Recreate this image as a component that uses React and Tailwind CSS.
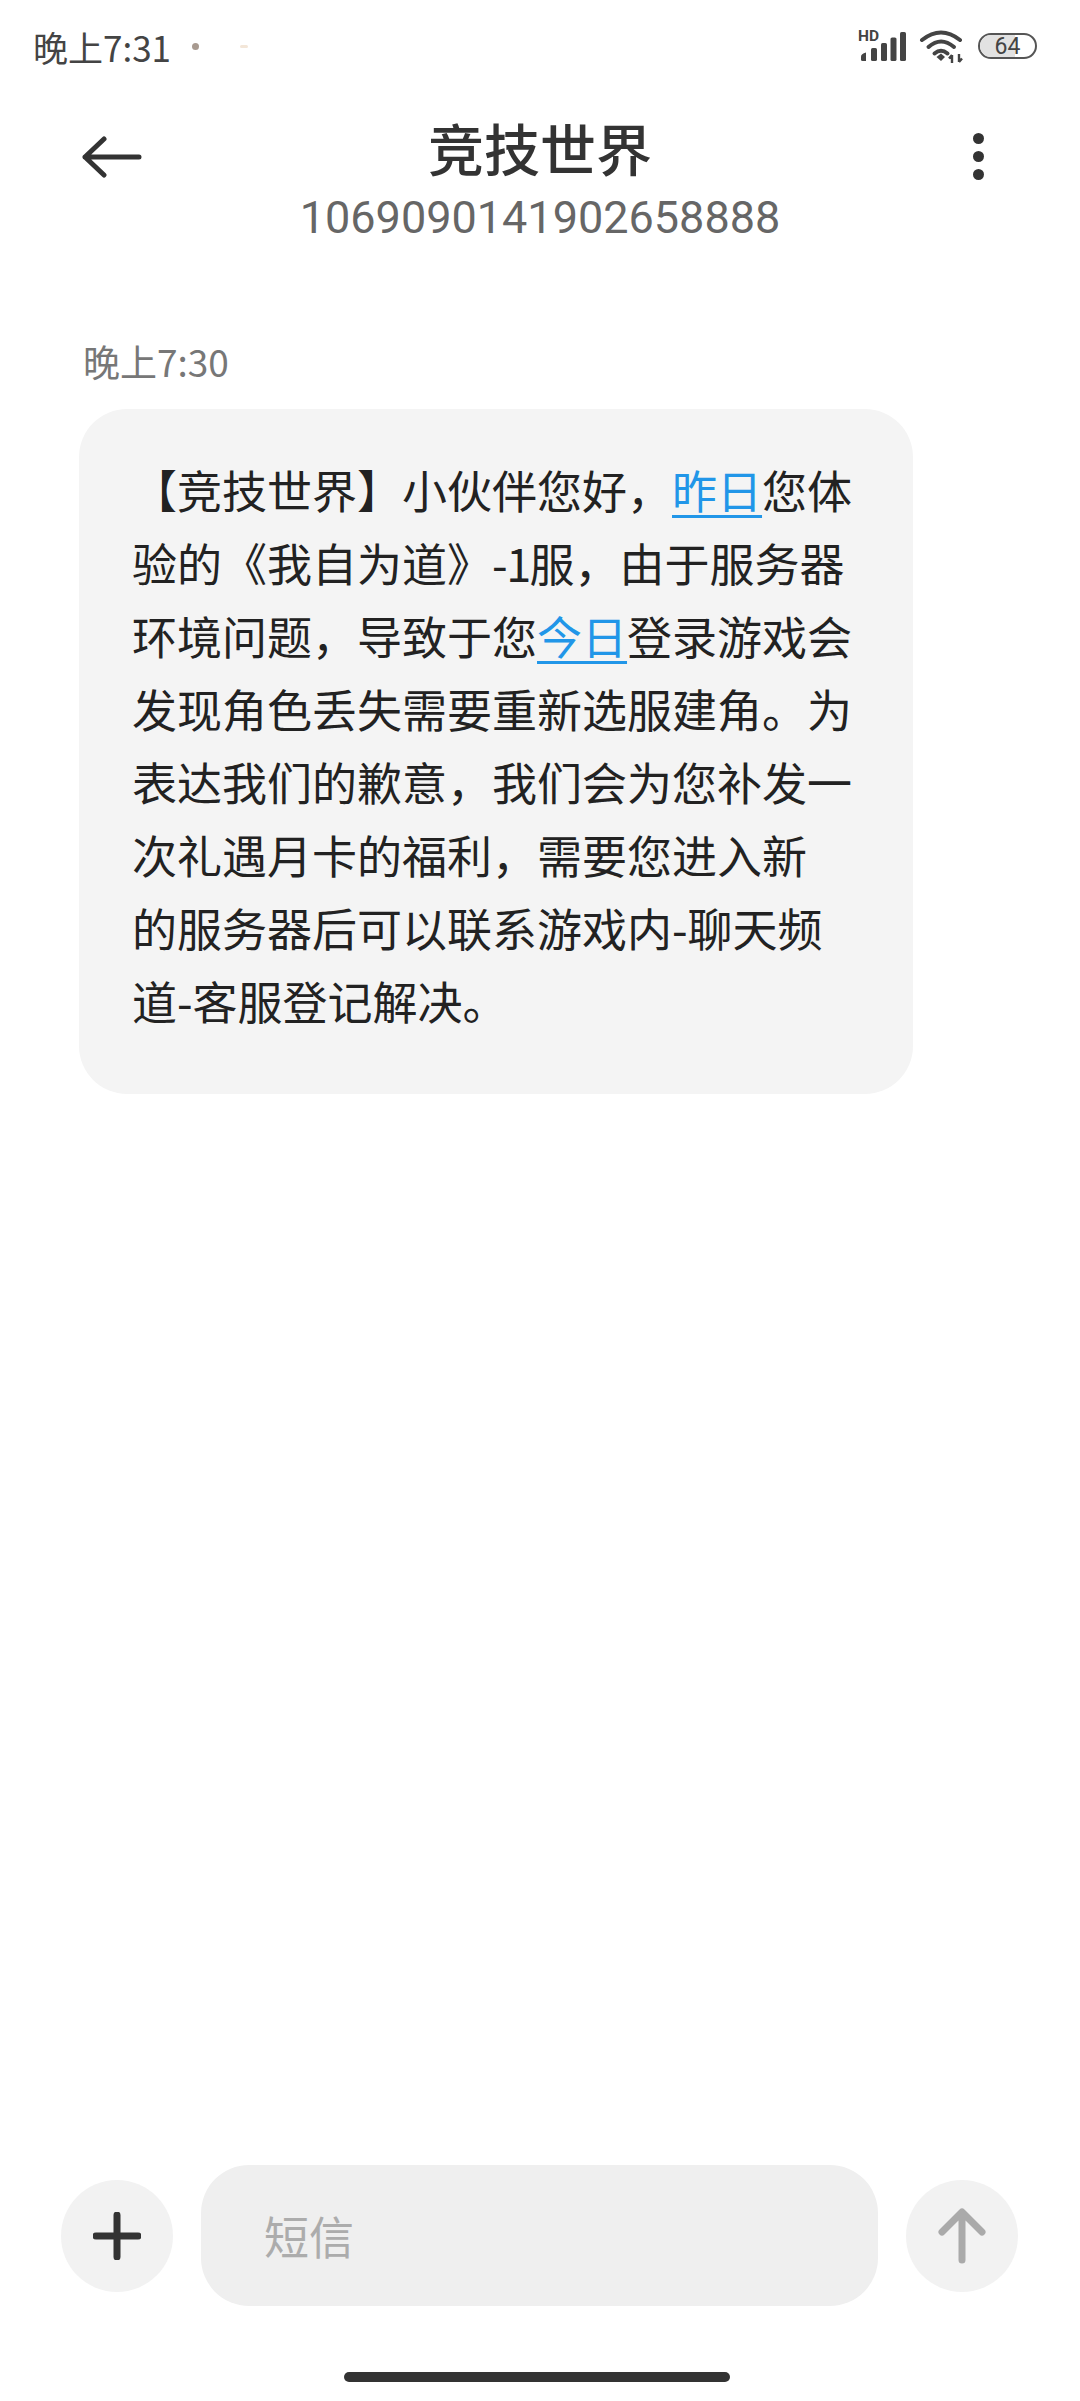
const cjk = { fontFamily: '"Noto Sans CJK SC", "Noto Sans", sans-serif' };

function Signal() {
  return (
    <div className="relative w-[50px] h-[32px]">
      <span className="absolute left-0 top-[-1px] text-[15.5px] leading-none font-bold text-[#444]" style={{ fontFamily: 'Roboto, sans-serif' }}>HD</span>
      <svg width="50" height="32" viewBox="0 0 50 32" className="block">
        <path d="M3 26.5 Q3 24 8 22.5 V31 H4.5 Q3 31 3 29.5Z" fill="#444" />
        <rect x="13" y="18" width="6" height="13" rx="1.6" fill="#444" />
        <rect x="23" y="13" width="6" height="18" rx="1.6" fill="#444" />
        <rect x="32.5" y="7.5" width="6" height="23.5" rx="1.6" fill="#444" />
        <rect x="42" y="2" width="6" height="29" rx="1.6" fill="#444" />
      </svg>
    </div>
  );
}

function Wifi() {
  return (
    <svg width="46" height="34" viewBox="0 0 46 34" className="block">
      <g fill="none" stroke="#444" strokeWidth="4" strokeLinecap="round">
        <path d="M3 11 Q22 -4 41 11" />
        <path d="M9.5 18 Q22 7 35 18" />
        <path d="M15.5 24.5 Q22 19 28.5 24.5" />
      </g>
      <path d="M17.5 28 L22 24.5 L26 28 L22 32Z" fill="#444" />
      <path d="M33 34 V26 M30 29.5 L33 26 M40 25 V33 M40 33 L43 29.5" stroke="#444" strokeWidth="2.4" fill="none" />
    </svg>
  );
}

function Line({ children }) {
  return <div className="whitespace-nowrap">{children}</div>;
}

function Link({ children }) {
  return <span className="text-[#2196e8] underline underline-offset-[6px] decoration-[3px]">{children}</span>;
}

export default function App() {
  return (
    <div className="w-[1080px] h-[2401px] bg-white flex flex-col overflow-hidden" style={cjk}>
      <div className="h-[92px] pl-[33px] pr-[43px] flex items-center justify-between">
        <div className="flex items-center">
          <span className="text-[35px] leading-none text-[#444444]">晚上7:31</span>
          <span className="ml-[21px] w-[7px] h-[7px] rounded-full bg-[#a89a90]" />
          <span className="ml-[41px] w-[8px] h-[3px] rounded-full bg-[#f3e6d8]" />
        </div>
        <div className="flex items-center">
          <Signal />
          <div className="ml-[11px]"><Wifi /></div>
          <div className="ml-[13px] relative w-[59px] h-[26px] rounded-full border-[2px] border-[#555] overflow-hidden flex items-center justify-center">
            <div className="absolute left-0 top-0 bottom-0 w-[64%] bg-[#e2e2e2]" />
            <span className="relative text-[23px] leading-none text-[#444]" style={{ fontFamily: 'Roboto, sans-serif' }}>64</span>
          </div>
        </div>
      </div>

      <div className="relative h-[155px] flex flex-col items-center">
        <div className="text-[56px] leading-[70px] mt-[20px] font-medium text-[#333333]">竞技世界</div>
        <div className="text-[45px] leading-[50px] mt-[11px] text-[#666666]" style={{ fontFamily: 'Roboto, sans-serif' }}>1069090141902658888</div>
        <svg width="60" height="42" viewBox="0 0 60 42" className="absolute left-[82px] top-[44px]">
          <path d="M57 21 H3 M22 3 L3 21 L22 39" fill="none" stroke="#333" strokeWidth="5" strokeLinecap="round" strokeLinejoin="round" />
        </svg>
        <div className="absolute left-[973px] top-[41px] flex flex-col gap-[7px]">
          <span className="w-[11px] h-[11px] rounded-full bg-[#333]" />
          <span className="w-[11px] h-[11px] rounded-full bg-[#333]" />
          <span className="w-[11px] h-[11px] rounded-full bg-[#333]" />
        </div>
      </div>

      <div className="mt-[90px] pl-[83px] text-[37px] leading-[48px] text-[#777777] h-[48px]">晚上7:30</div>

      <div className="ml-[79px] mt-[24px] w-[834px] h-[685px] rounded-[48px] bg-[#f4f4f4] pl-[53px] pt-[44px] text-[45px] leading-[73px] text-[#222222]">
        <Line>【竞技世界】小伙伴您好，<Link>昨日</Link>您体</Line>
        <Line>验的《我自为道》<span className="tracking-[-1.5px]">-1</span>服，由于服务器</Line>
        <Line>环境问题，导致于您<Link>今日</Link>登录游戏会</Line>
        <Line>发现角色丢失需要重新选服建角。为</Line>
        <Line>表达我们的歉意，我们会为您补发一</Line>
        <Line>次礼遇月卡的福利，需要您进入新</Line>
        <Line>的服务器后可以联系游戏内-聊天频</Line>
        <Line>道-客服登记解决。</Line>
      </div>

      <div className="flex-1" />

      <div className="flex items-center pl-[61px] h-[141px]">
        <div className="w-[112px] h-[112px] rounded-full bg-[#f2f2f2] flex items-center justify-center">
          <svg width="48" height="48" viewBox="0 0 48 48">
            <path d="M24 3 V45 M3 24 H45" stroke="#333" strokeWidth="7" strokeLinecap="round" />
          </svg>
        </div>
        <div className="ml-[28px] w-[677px] h-[141px] rounded-[48px] bg-[#efefef] flex items-center pl-[63px] text-[45px] text-[#acacac]">短信</div>
        <div className="ml-[28px] w-[112px] h-[112px] rounded-full bg-[#f2f2f2] flex items-center justify-center">
          <svg width="48" height="56" viewBox="0 0 48 56">
            <path d="M24 52 V5 M4 24 L24 4 L44 24" fill="none" stroke="#aaa" strokeWidth="7" strokeLinecap="round" strokeLinejoin="round" />
          </svg>
        </div>
      </div>

      <div className="h-[95px] flex justify-center pt-[66px] pr-[6px]">
        <div className="w-[386px] h-[10px] rounded-full bg-[#333333]" />
      </div>
    </div>
  );
}
